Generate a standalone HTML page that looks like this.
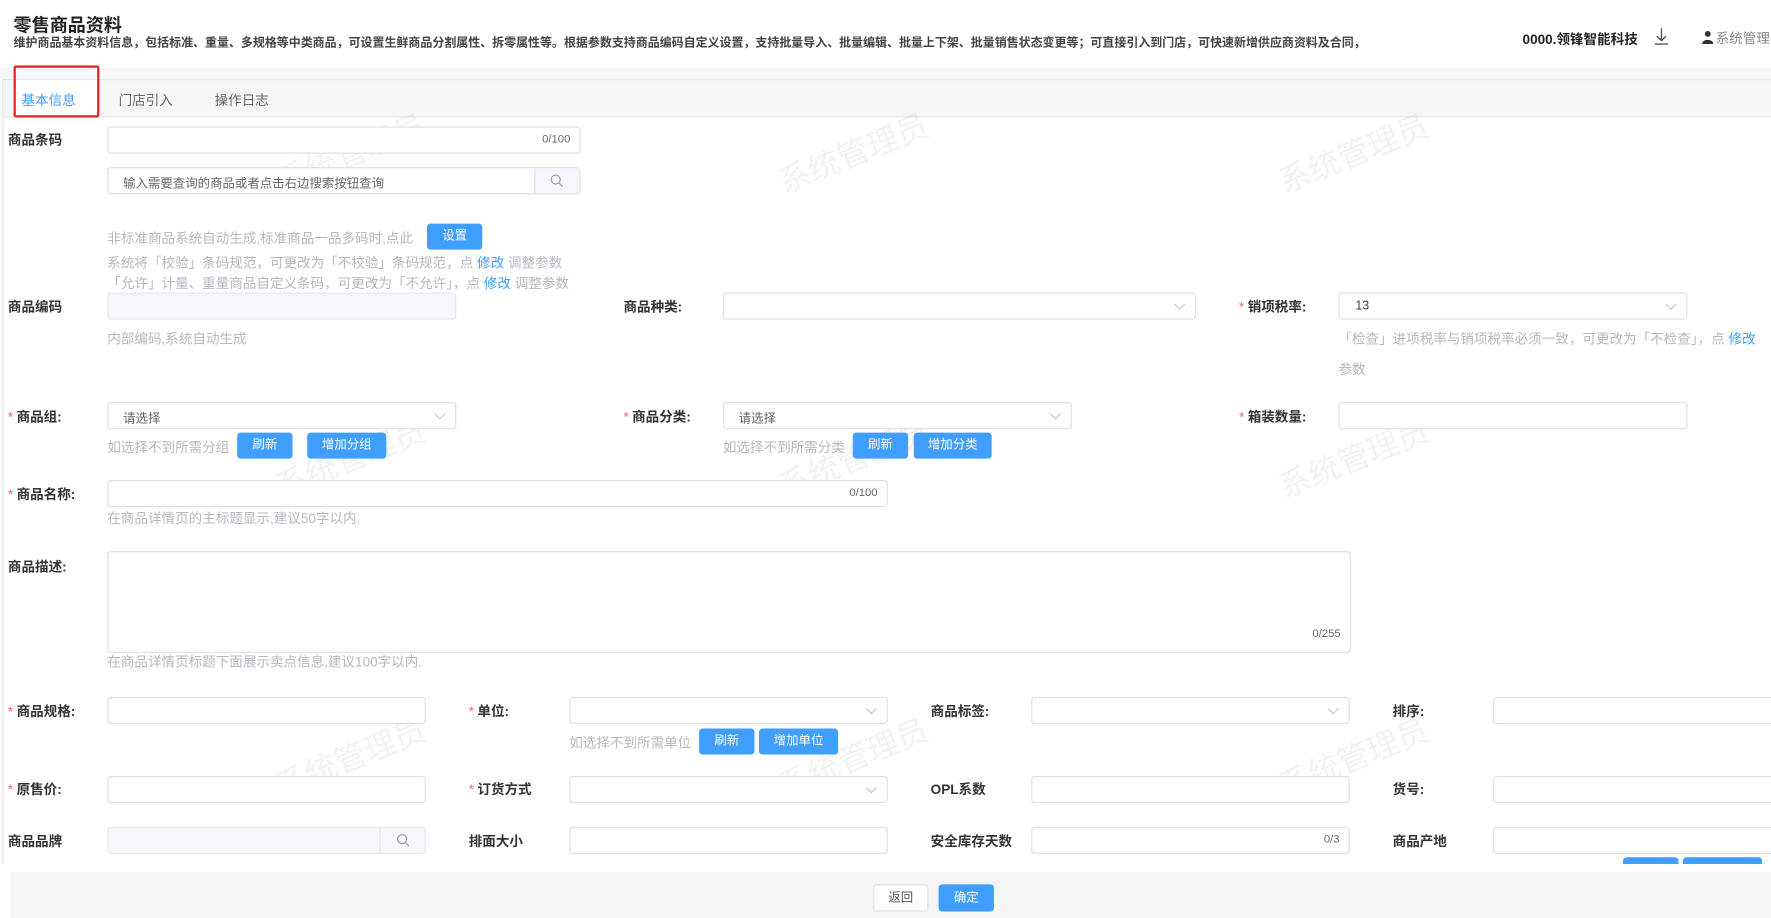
<!DOCTYPE html>
<html><head><meta charset="utf-8"><style>
html,body{margin:0;padding:0;width:1771px;height:918px;overflow:hidden;background:#fff}
#w{position:absolute;left:0;top:0;width:1568px;height:813px;transform:scale(1.12947);transform-origin:0 0;font-family:"Liberation Sans","Noto Sans CJK SC",sans-serif;color:#333;overflow:hidden}
.a{position:absolute;white-space:nowrap}
.lb{font-size:12px;font-weight:bold;color:#333}
.st{color:#f56c6c;font-weight:normal;margin-right:3px}
.in{position:absolute;border:1px solid #dcdfe6;border-radius:3px;background:#fff;box-sizing:border-box;height:24px}
.dis{background:#f5f7fa;border-color:#e4e7ed}
.cnt{position:absolute;right:8px;top:5px;font-size:10px;color:#666}
.ph{position:absolute;left:13px;top:5px;font-size:11px;color:#606266}
.ar{position:absolute;right:10px;top:6px;width:6px;height:6px;border-right:1px solid #c0c4cc;border-bottom:1px solid #c0c4cc;transform:rotate(45deg)}
.hint{font-size:12px;color:#b4b8bf}
.bt{position:absolute;background:#409eff;color:#fff;font-size:11px;text-align:center;border-radius:3px;height:23px;line-height:23px}
.bl{color:#409eff}
.wm{position:absolute;font-size:28px;color:rgba(0,0,0,0.05);transform:rotate(-22deg);white-space:nowrap}
</style></head><body><div id="w">
<div class="a" style="left:12px;top:9px;font-size:16px;font-weight:bold;color:#222">零售商品资料</div>
<div class="a" style="left:12px;top:30px;font-size:10.6px;font-weight:bold;color:#444">维护商品基本资料信息，包括标准、重量、多规格等中类商品，可设置生鲜商品分割属性、拆零属性等。根据参数支持商品编码自定义设置，支持批量导入、批量编辑、批量上下架、批量销售状态变更等；可直接引入到门店，可快速新增供应商资料及合同，</div>
<div class="a" style="left:1348px;top:26px;font-size:12px;font-weight:bold;color:#222">0000.领锋智能科技</div>
<svg class="a" style="left:1464px;top:24px" width="14" height="16" viewBox="0 0 14 16"><path d="M7 1v11M3 8l4 4 4-4M1 15h12" stroke="#555" stroke-width="1.2" fill="none"/></svg>
<svg class="a" style="left:1507px;top:27px" width="10" height="12" viewBox="0 0 10 12"><circle cx="5" cy="3" r="2.6" fill="#333"/><path d="M0 12c0-5 10-5 10 0z" fill="#333"/></svg>
<div class="a" style="left:1519px;top:25px;font-size:12px;color:#888">系统管理员</div>
<div class="a" style="left:0;top:60px;width:1568px;height:10px;background:#f6f7f9"></div>
<div class="a" style="left:2px;top:70px;width:1566px;height:34px;background:#f5f6f8;border-top:1px solid #e4e7ed;border-bottom:1px solid #e4e7ed;box-sizing:border-box"></div>
<div class="a" style="left:2px;top:70px;width:1px;height:695px;background:#e4e7ed"></div>
<div class="a" style="left:13px;top:71px;width:73px;height:33px;background:#fff"></div>
<div class="a" style="left:12px;top:58px;width:72px;height:42px;border:2px solid #e8231f;border-radius:2px"></div>
<div class="a" style="left:19px;top:80px;font-size:12px;color:#409eff">基本信息</div>
<div class="a" style="left:105px;top:80px;font-size:12px;color:#666">门店引入</div>
<div class="a" style="left:190px;top:80px;font-size:12px;color:#666">操作日志</div>

<div class="wm" style="left:240px;top:115px">系统管理员</div>
<div class="wm" style="left:685px;top:115px">系统管理员</div>
<div class="wm" style="left:1128px;top:115px">系统管理员</div>
<div class="wm" style="left:240px;top:385px">系统管理员</div>
<div class="wm" style="left:685px;top:385px">系统管理员</div>
<div class="wm" style="left:1128px;top:385px">系统管理员</div>
<div class="wm" style="left:240px;top:650px">系统管理员</div>
<div class="wm" style="left:685px;top:650px">系统管理员</div>
<div class="wm" style="left:1128px;top:650px">系统管理员</div>

<div class="a lb" style="left:7px;top:115px">商品条码</div>
<div class="in" style="left:95px;top:112px;width:419px"><span class="cnt">0/100</span></div>
<div class="in" style="left:95px;top:148px;width:419px"><span class="ph" style="color:#666">输入需要查询的商品或者点击右边搜索按钮查询</span><div style="position:absolute;right:0;top:0;width:39px;height:22px;background:#f5f7fa;border-left:1px solid #dcdfe6"><svg style="position:absolute;left:13px;top:5px" width="12" height="12"><circle cx="5" cy="5" r="4" stroke="#999" fill="none"/><path d="M8 8l3 3" stroke="#999"/></svg></div></div>
<div class="a hint" style="left:95px;top:202px">非标准商品系统自动生成,标准商品一品多码时,点此</div>
<div class="bt" style="left:378px;top:198px;width:49px">设置</div>
<div class="a hint" style="left:95px;top:224px">系统将「校验」条码规范，可更改为「不校验」条码规范，点 <span class="bl">修改</span> 调整参数</div>
<div class="a hint" style="left:95px;top:242px">「允许」计量、重量商品自定义条码，可更改为「不允许」，点 <span class="bl">修改</span> 调整参数</div>

<div class="a lb" style="left:7px;top:263px">商品编码</div>
<div class="in dis" style="left:95px;top:259px;width:309px"></div>
<div class="a hint" style="left:95px;top:291px">内部编码,系统自动生成</div>
<div class="a lb" style="left:552px;top:263px">商品种类:</div>
<div class="in" style="left:640px;top:259px;width:419px"><span class="ar"></span></div>
<div class="a lb" style="left:1097px;top:263px"><span class="st">*</span>销项税率:</div>
<div class="in" style="left:1185px;top:259px;width:309px"><span class="ph" style="left:14px;color:#444">13</span><span class="ar"></span></div>
<div class="a hint" style="left:1185px;top:291px">「检查」进项税率与销项税率必须一致，可更改为「不检查」，点 <span class="bl">修改</span></div>
<div class="a hint" style="left:1185px;top:318px">参数</div>

<div class="a lb" style="left:7px;top:360px"><span class="st">*</span>商品组:</div>
<div class="in" style="left:95px;top:356px;width:309px"><span class="ph">请选择</span><span class="ar"></span></div>
<div class="a hint" style="left:95px;top:387px">如选择不到所需分组</div>
<div class="bt" style="left:210px;top:383px;width:49px">刷新</div>
<div class="bt" style="left:272px;top:383px;width:70px">增加分组</div>
<div class="a lb" style="left:552px;top:360px"><span class="st">*</span>商品分类:</div>
<div class="in" style="left:640px;top:356px;width:309px"><span class="ph">请选择</span><span class="ar"></span></div>
<div class="a hint" style="left:640px;top:387px">如选择不到所需分类</div>
<div class="bt" style="left:755px;top:383px;width:49px">刷新</div>
<div class="bt" style="left:809px;top:383px;width:69px">增加分类</div>
<div class="a lb" style="left:1097px;top:360px"><span class="st">*</span>箱装数量:</div>
<div class="in" style="left:1185px;top:356px;width:309px"></div>

<div class="a lb" style="left:7px;top:429px"><span class="st">*</span>商品名称:</div>
<div class="in" style="left:95px;top:425px;width:691px"><span class="cnt">0/100</span></div>
<div class="a hint" style="left:95px;top:450px">在商品详情页的主标题显示,建议50字以内.</div>

<div class="a lb" style="left:7px;top:493px">商品描述:</div>
<div class="in" style="left:95px;top:488px;width:1101px;height:90px"><span class="cnt" style="top:auto;bottom:10px">0/255</span></div>
<div class="a hint" style="left:95px;top:577px">在商品详情页标题下面展示卖点信息,建议100字以内.</div>

<div class="a lb" style="left:7px;top:621px"><span class="st">*</span>商品规格:</div>
<div class="in" style="left:95px;top:617px;width:282px"></div>
<div class="a lb" style="left:415px;top:621px"><span class="st">*</span>单位:</div>
<div class="in" style="left:504px;top:617px;width:282px"><span class="ar"></span></div>
<div class="a lb" style="left:824px;top:621px">商品标签:</div>
<div class="in" style="left:913px;top:617px;width:282px"><span class="ar"></span></div>
<div class="a lb" style="left:1233px;top:621px">排序:</div>
<div class="in" style="left:1322px;top:617px;width:260px"></div>
<div class="a hint" style="left:504px;top:649px">如选择不到所需单位</div>
<div class="bt" style="left:619px;top:645px;width:49px">刷新</div>
<div class="bt" style="left:672px;top:645px;width:70px">增加单位</div>

<div class="a lb" style="left:7px;top:690px"><span class="st">*</span>原售价:</div>
<div class="in" style="left:95px;top:687px;width:282px"></div>
<div class="a lb" style="left:415px;top:690px"><span class="st">*</span>订货方式</div>
<div class="in" style="left:504px;top:687px;width:282px"><span class="ar"></span></div>
<div class="a lb" style="left:824px;top:690px">OPL系数</div>
<div class="in" style="left:913px;top:687px;width:282px"></div>
<div class="a lb" style="left:1233px;top:690px">货号:</div>
<div class="in" style="left:1322px;top:687px;width:260px"></div>

<div class="a lb" style="left:7px;top:736px">商品品牌</div>
<div class="in dis" style="left:95px;top:732px;width:282px"><div style="position:absolute;right:0;top:0;width:39px;height:22px;border-left:1px solid #dcdfe6"><svg style="position:absolute;left:14px;top:5px" width="12" height="12"><circle cx="5" cy="5" r="4" stroke="#999" fill="none"/><path d="M8 8l3 3" stroke="#999"/></svg></div></div>
<div class="a lb" style="left:415px;top:736px">排面大小</div>
<div class="in" style="left:504px;top:732px;width:282px"></div>
<div class="a lb" style="left:824px;top:736px">安全库存天数</div>
<div class="in" style="left:913px;top:732px;width:282px"><span class="cnt">0/3</span></div>
<div class="a lb" style="left:1233px;top:736px">商品产地</div>
<div class="in" style="left:1322px;top:732px;width:260px"></div>
<div class="bt" style="left:1437px;top:759px;width:49px;height:6px;border-radius:3px 3px 0 0"></div>
<div class="bt" style="left:1490px;top:759px;width:70px;height:6px;border-radius:3px 3px 0 0"></div>

<div class="a" style="left:0;top:765px;width:1568px;height:48px;background:#fff"></div>
<div class="a" style="left:9px;top:772px;width:1559px;height:41px;background:#f5f5f5"></div>
<div class="a" style="left:773px;top:783px;width:49px;height:24px;background:#fff;border:1px solid #dcdfe6;box-sizing:border-box;border-radius:3px;font-size:11px;text-align:center;line-height:22px;color:#555">返回</div>
<div class="bt" style="left:831px;top:783px;width:49px;height:24px;line-height:24px">确定</div>
</div></body></html>
